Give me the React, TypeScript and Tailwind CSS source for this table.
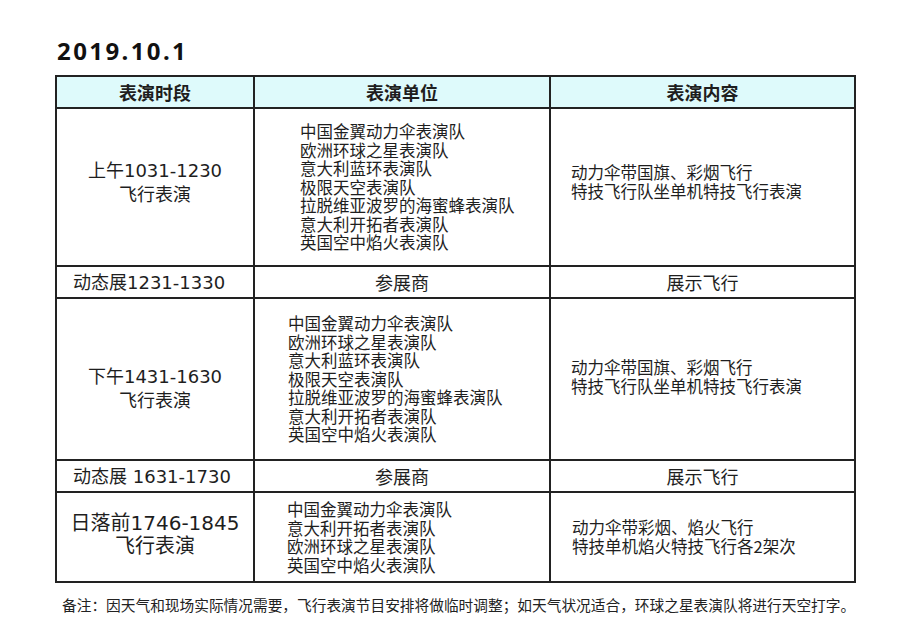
import React from "react";

const cjk = "font-['Noto_Sans_CJK_SC',sans-serif]";
const num = "font-['DejaVu_Sans',sans-serif]";

const teamsA = [
  "中国金翼动力伞表演队",
  "欧洲环球之星表演队",
  "意大利蓝环表演队",
  "极限天空表演队",
  "拉脱维亚波罗的海蜜蜂表演队",
  "意大利开拓者表演队",
  "英国空中焰火表演队",
];

const teamsB = [
  "中国金翼动力伞表演队",
  "意大利开拓者表演队",
  "欧洲环球之星表演队",
  "英国空中焰火表演队",
];

function Lines({ items }: { items: string[] }) {
  return (
    <div className="leading-[18.5px]">
      {items.map((t) => (
        <div key={t}>{t}</div>
      ))}
    </div>
  );
}

export default function App() {
  const cell = "border-2 border-[#222] align-middle p-0";
  return (
    <div className={`w-[918px] h-[632px] bg-white text-[#1e1e1e] ${cjk}`}>
      <div className="pl-[57px] pt-[36px] h-[75px]">
        <h1 className="font-['Noto_Sans',sans-serif] font-bold text-[24px] leading-[30px] tracking-[2.4px] text-[#111]">
          2019.10.1
        </h1>
      </div>
      <table className="ml-[55px] border-collapse table-fixed w-[799px] text-[16.5px]">
        <colgroup>
          <col className="w-[198px]" />
          <col className="w-[296px]" />
          <col className="w-[305px]" />
        </colgroup>
        <thead>
          <tr className="h-[32px] bg-[#defafb] text-[18px] font-bold">
            <th className={`${cell} text-center`}>表演时段</th>
            <th className={`${cell} text-center`}>表演单位</th>
            <th className={`${cell} text-center`}>表演内容</th>
          </tr>
        </thead>
        <tbody>
          <tr className="h-[158px]">
            <td className={`${cell} text-center text-[18px] leading-[22px]`}>
              <div className="pb-[12px]">
                <div>
                  上午<span className={num}>1031-1230</span>
                </div>
                <div>飞行表演</div>
              </div>
            </td>
            <td className={`${cell} pl-[45px]`}>
              <Lines items={teamsA} />
            </td>
            <td className={`${cell} pl-[20px]`}>
              <div className="leading-[19px] pb-[10px]">
                <div>动力伞带国旗、彩烟飞行</div>
                <div>特技飞行队坐单机特技飞行表演</div>
              </div>
            </td>
          </tr>
          <tr className="h-[32px] text-[18px]">
            <td className={`${cell} pl-[16px]`}>
              动态展<span className={num}>1231-1330</span>
            </td>
            <td className={`${cell} text-center`}>参展商</td>
            <td className={`${cell} text-center`}>展示飞行</td>
          </tr>
          <tr className="h-[162px]">
            <td className={`${cell} text-center text-[18px] leading-[22px]`}>
              <div className="pt-[16px]">
                <div>
                  下午<span className={num}>1431-1630</span>
                </div>
                <div>飞行表演</div>
              </div>
            </td>
            <td className={`${cell} pl-[33px]`}>
              <Lines items={teamsA} />
            </td>
            <td className={`${cell} pl-[20px]`}>
              <div className="leading-[19px] pb-[4px]">
                <div>动力伞带国旗、彩烟飞行</div>
                <div>特技飞行队坐单机特技飞行表演</div>
              </div>
            </td>
          </tr>
          <tr className="h-[32px] text-[18px]">
            <td className={`${cell} pl-[16px]`}>
              动态展<span className={num}>&nbsp;1631-1730</span>
            </td>
            <td className={`${cell} text-center`}>参展商</td>
            <td className={`${cell} text-center`}>展示飞行</td>
          </tr>
          <tr className="h-[90px]">
            <td className={`${cell} text-center text-[20px] leading-[22px]`}>
              <div className="pb-[8px]">
                <div>
                  日落前<span className={num}>1746-1845</span>
                </div>
                <div>飞行表演</div>
              </div>
            </td>
            <td className={`${cell} pl-[32px]`}>
              <Lines items={teamsB} />
            </td>
            <td className={`${cell} pl-[21px]`}>
              <div className="leading-[19px]">
                <div>动力伞带彩烟、焰火飞行</div>
                <div>特技单机焰火特技飞行各2架次</div>
              </div>
            </td>
          </tr>
        </tbody>
      </table>
      <p className="pl-[62px] pt-[12px] text-[14.7px] leading-[20px] text-[#222]">
        备注：因天气和现场实际情况需要，飞行表演节目安排将做临时调整；如天气状况适合，环球之星表演队将进行天空打字。
      </p>
    </div>
  );
}
